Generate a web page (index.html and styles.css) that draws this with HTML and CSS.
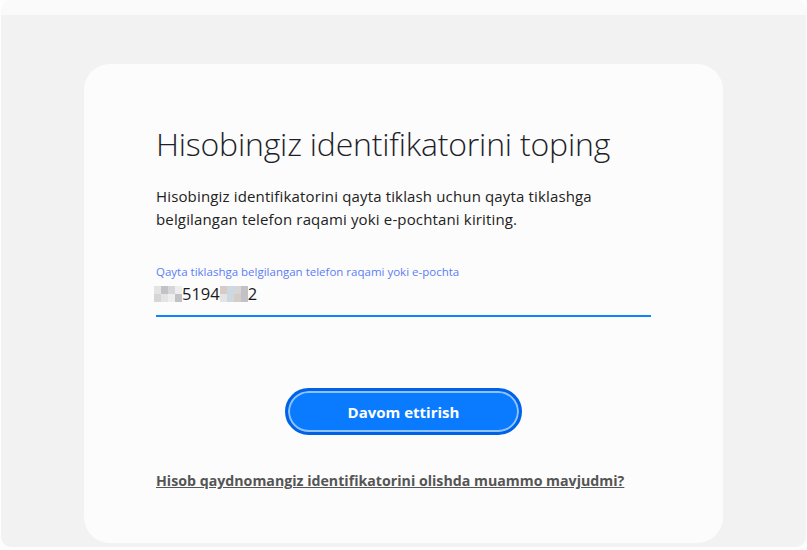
FILE: index.html
```
<!DOCTYPE html>
<html lang="uz">
<head>
  <meta charset="UTF-8">
  <title>Hisobingiz identifikatorini toping</title>
  <link rel="stylesheet" href="styles.css">
</head>
<body>
  <div class="frame">
    <div class="frame-top"></div>
    <div class="frame-body">
      <div class="card">
        <h1 class="title">Hisobingiz identifikatorini toping</h1>
        <p class="desc">Hisobingiz identifikatorini qayta tiklash uchun qayta tiklashga belgilangan telefon raqami yoki e-pochtani kiriting.</p>

        <div class="field">
          <label class="field-label">Qayta tiklashga belgilangan telefon raqami yoki e-pochta</label>
          <div class="field-value">
            <span class="mosaic">
              <i class="c1"></i><i class="c2"></i><i class="c3"></i><i class="c4"></i>
              <i class="c3"></i><i class="c1"></i><i class="c4"></i><i class="c2"></i>
            </span>5194<span class="mosaic">
              <i class="c6"></i><i class="c5"></i><i class="c3"></i><i class="c2"></i>
              <i class="c1"></i><i class="c5"></i><i class="c6"></i><i class="c2"></i>
            </span>2
          </div>
        </div>

        <div class="actions">
          <button class="btn">Davom ettirish</button>
        </div>

        <a class="help-link" href="#">Hisob qaydnomangiz identifikatorini olishda muammo mavjudmi?</a>
      </div>
    </div>
  </div>
</body>
</html>
```

FILE: styles.css
```
body {
  margin: 0;
  background-color: #fdfdfd;
  font-family: "Open Sans", "Noto Sans", sans-serif;
  color: #222;
}

.frame {
  margin: 0 1px;
  height: 547px;
  border-radius: 10px;
  overflow: hidden;
  display: flex;
  flex-direction: column;
}

.frame-top {
  height: 15px;
  background-color: #fafafa;
}

.frame-body {
  flex: 1;
  background-color: #f2f2f2;
  padding: 49px 0 4px 83px;
}

.card {
  width: 639px;
  height: 479px;
  box-sizing: border-box;
  background-color: #fcfcfc;
  border-radius: 26px;
  padding: 58px 72px 0 72px;
}

.title {
  margin: 0;
  font-size: 32px;
  font-weight: 300;
  line-height: 44px;
  color: #1f1f2b;
  letter-spacing: -0.2px;
}

.desc {
  margin: 19px 0 0 0;
  font-size: 15px;
  line-height: 23px;
  letter-spacing: 0.15px;
  color: #222;
  width: 480px;
}

.field {
  margin-top: 33px;
  width: 495px;
  border-bottom: 2px solid #0a84ff;
  padding-bottom: 10px;
}

.field-label {
  display: block;
  font-size: 11.5px;
  line-height: 16px;
  color: #5b7cf5;
}

.field-value {
  margin-top: 3px;
  font-size: 16.5px;
  line-height: 22px;
  color: #1a1a1a;
  height: 22px;
  display: flex;
  align-items: center;
}

.mosaic {
  display: inline-grid;
  grid-template-columns: repeat(4, 7px);
  grid-auto-rows: 8px;
}

.mosaic:first-child {
  margin-left: -2px;
}

.mosaic i {
  display: block;
}

.c1 { background-color: #e4e4e4; }
.c2 { background-color: #c2c2c6; }
.c3 { background-color: #d6d6d6; }
.c4 { background-color: #eeeeee; }
.c5 { background-color: #cdd8e0; }
.c6 { background-color: #d5ccc8; }

.actions {
  margin-top: 71px;
  display: flex;
  justify-content: center;
}

.btn {
  width: 237px;
  height: 47px;
  border-radius: 24px;
  border: 3px solid #0062e6;
  background-color: #0a7bff;
  box-shadow: inset 0 0 0 2px #8ec3ff;
  color: #fff;
  font-family: "Open Sans", "Noto Sans", sans-serif;
  font-size: 15px;
  font-weight: 700;
  cursor: pointer;
}

.help-link {
  display: inline-block;
  margin-top: 36px;
  font-size: 14.2px;
  font-weight: 700;
  color: #555;
  white-space: nowrap;
  text-decoration: underline;
}
```
